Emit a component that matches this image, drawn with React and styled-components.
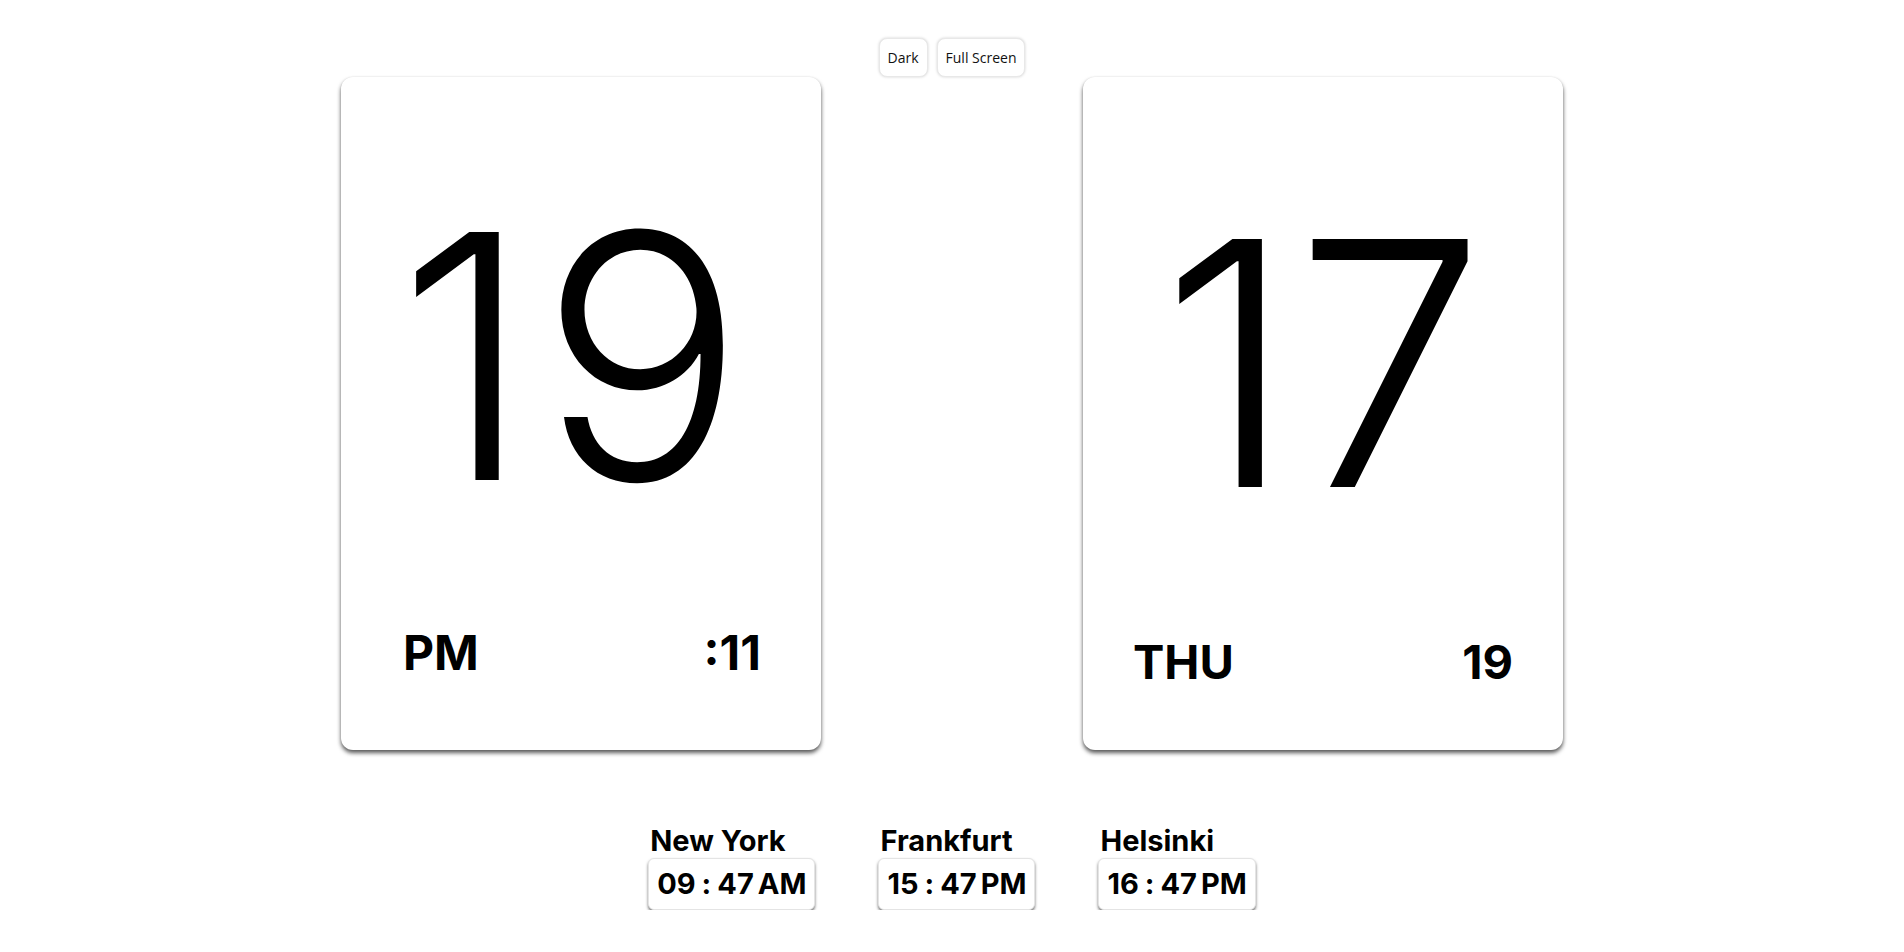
import React from "react";
import styled, { createGlobalStyle } from "styled-components";

const GlobalStyle = createGlobalStyle`
  html, body {
    margin: 0;
    padding: 0;
    background: #fff;
    color: #000;
    font-family: Inter, "Liberation Sans", sans-serif;
  }
`;

const Page = styled.div`
  display: flex;
  flex-direction: column;
  align-items: center;
  padding-top: 38px;
`;

const Toolbar = styled.div`
  display: flex;
  gap: 9px;
`;

const ToolButton = styled.button`
  height: 39px;
  padding: 0 8px;
  font-family: "Open Sans", "Liberation Sans", sans-serif;
  font-size: 14px;
  color: #111;
  background: #fff;
  border: 1px solid #e8e8e8;
  border-radius: 8px;
  box-shadow: 0 0 3px rgba(0, 0, 0, 0.18);
  cursor: pointer;
`;

const Cards = styled.div`
  display: flex;
  gap: 262px;
`;

const Card = styled.div`
  width: 480px;
  height: 673px;
  box-sizing: border-box;
  display: flex;
  flex-direction: column;
  padding-top: ${(p) => p.$top}px;
  padding-bottom: ${(p) => p.$bottom}px;
  background: #fff;
  border-radius: 12px;
  box-shadow: 0 3px 4px rgba(0, 0, 0, 0.65), 0 0 2px rgba(0, 0, 0, 0.08);
`;

const BigNumber = styled.div`
  font-size: 341px;
  font-weight: 300;
  line-height: 1;
  text-align: center;
  letter-spacing: ${(p) => p.$spacing || 0}px;
  margin-left: ${(p) => p.$shift || 0}px;
`;

const CardFooter = styled.div`
  margin-top: auto;
  display: flex;
  justify-content: space-between;
  padding: 0 ${(p) => p.$right}px 0 ${(p) => p.$left}px;
  font-size: ${(p) => p.$size}px;
  font-weight: 700;
  line-height: 1;
`;

const Cities = styled.div`
  display: flex;
  gap: 63px;
  margin-top: 74px;
`;

const City = styled.div`
  display: flex;
  flex-direction: column;
  align-items: flex-start;
`;

const CityName = styled.div`
  font-size: 29px;
  font-weight: 700;
  line-height: 34px;
  padding-left: 2px;
`;

const TimeBox = styled.div`
  display: flex;
  align-items: baseline;
  padding: 10px 8px 11px;
  font-size: 29px;
  font-weight: 700;
  line-height: 1;
  background: #fff;
  border: 1px solid #e4e4e4;
  border-radius: 6px;
  box-shadow: 0 2px 3px rgba(0, 0, 0, 0.55);
`;

const Colon = styled.span`
  margin: 0 6px;
`;

const Meridiem = styled.span`
  margin-left: 4px;
`;

const cities = [
  { name: "New York", h: "09", m: "47", ap: "AM" },
  { name: "Frankfurt", h: "15", m: "47", ap: "PM" },
  { name: "Helsinki", h: "16", m: "47", ap: "PM" },
];

function App() {
  return (
    <Page>
      <GlobalStyle />
      <Toolbar>
        <ToolButton>Dark</ToolButton>
        <ToolButton>Full Screen</ToolButton>
      </Toolbar>
      <Cards>
        <Card $top={109} $bottom={73}>
          <BigNumber $shift={-12} $spacing={8}>19</BigNumber>
          <CardFooter $left={62} $right={60} $size={48}>
            <span>PM</span>
            <span>:11</span>
          </CardFooter>
        </Card>
        <Card $top={116} $bottom={65}>
          <BigNumber>17</BigNumber>
          <CardFooter $left={50} $right={50} $size={47}>
            <span>THU</span>
            <span>19</span>
          </CardFooter>
        </Card>
      </Cards>
      <Cities>
        {cities.map((c) => (
          <City key={c.name}>
            <CityName>{c.name}</CityName>
            <TimeBox>
              <span>{c.h}</span>
              <Colon>:</Colon>
              <span>{c.m}</span>
              <Meridiem>{c.ap}</Meridiem>
            </TimeBox>
          </City>
        ))}
      </Cities>
    </Page>
  );
}

export default App;
